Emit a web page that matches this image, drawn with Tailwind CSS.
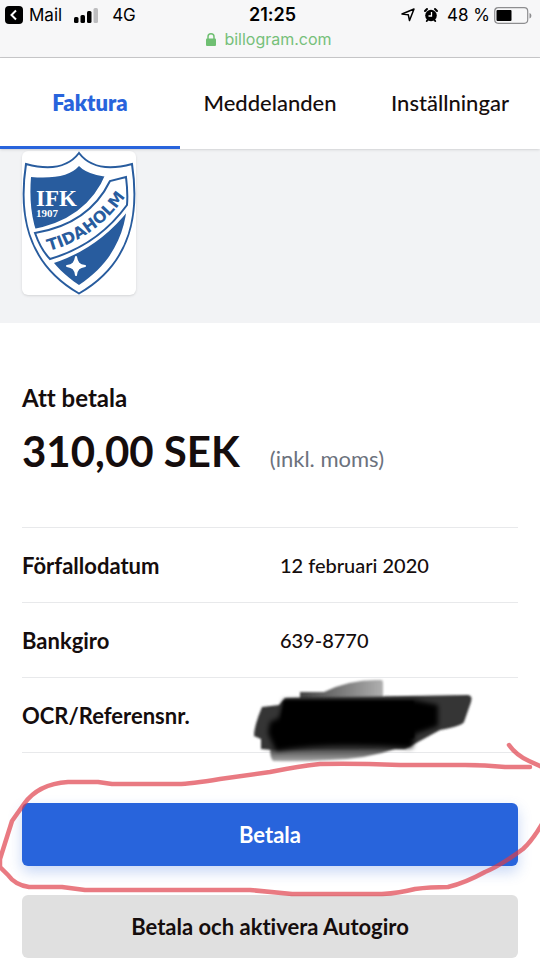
<!DOCTYPE html>
<html lang="sv">
<head>
  <meta charset="UTF-8">
  <meta name="viewport" content="width=device-width, initial-scale=1.0">
  <title>Faktura</title>
  <script src="https://cdn.jsdelivr.net/npm/@tailwindcss/browser@4"></script>
</head>
<body class="bg-white font-[Lato,sans-serif] text-[#150d0d] overflow-x-hidden [font-variant-ligatures:none]">
  <!-- Statusfält -->
  <header class="bg-[#f7f7f8] border-b border-[#c9c9cb] h-[58px] pt-[3px] font-[Inter,sans-serif] text-black">
    <div class="grid grid-cols-3 items-center h-6 pl-[5px] text-[17px] leading-6">
      <div class="flex items-center">
        <a href="#" class="flex items-center gap-[6px]">
          <svg class="w-[18px] h-[18px]" viewBox="0 0 18 18"><rect width="18" height="18" rx="4"/><path d="M11 4.500 6.500 9l4.500 4.500" fill="none" stroke="#fff" stroke-width="2"/></svg>
          Mail
        </a>
        <svg class="w-6 h-[15px] ml-3" viewBox="0 0 24 15"><rect y="9" width="4.500" height="6" rx="1.500"/><rect x="6.500" y="7" width="4.500" height="8" rx="1.500"/><rect x="13" y="3" width="4.500" height="12" rx="1.500"/><rect x="19.500" width="4.500" height="15" rx="1.500" fill="#bdbdbf"/></svg>
        <span class="ml-[14px]">4G</span>
      </div>
      <div class="text-center text-lg leading-6 font-semibold">21:25</div>
      <div class="flex items-center justify-end pr-2 whitespace-nowrap">
        <svg class="w-[14px] h-[14px] mr-2 shrink-0" viewBox="0 0 14 14"><path d="M13 1 8.500 12.500 7.300 6.800 1 6Z" fill="none" stroke="#000" stroke-width="1.500" stroke-linejoin="round"/></svg>
        <svg class="w-4 h-4 mr-2 shrink-0" viewBox="0 0 16 16"><circle cx="8" cy="8.500" r="5.800"/><path d="M2 4 4 2M12 2l2 2M3.800 14l.8-1M12.200 14l-.8-1" stroke="#000" stroke-width="2" stroke-linecap="round"/><path d="M8.500 5v4H5.500" fill="none" stroke="#fff" stroke-width="1.300"/></svg>
        48 %
        <svg class="w-[38px] h-[17px] ml-1 shrink-0" viewBox="0 0 38 17"><rect x=".7" y=".7" width="33" height="15.600" rx="3.500" fill="none" stroke="#8e8e90" stroke-width="1.200"/><rect x="2.500" y="3" width="15" height="11" rx="1"/><path d="M35.500 6v5.500c2.500-.8 2.500-4.700 0-5.500Z" fill="#8e8e90"/></svg>
      </div>
    </div>
    <div class="flex items-center justify-center gap-2 pr-[2px] text-[#76c07a] text-base leading-6">
      <svg class="w-[10px] h-[13px]" viewBox="0 0 10 13"><rect y="5.500" width="10" height="7.500" rx="1" fill="#6fbf72"/><path d="M2 6V3.800a3 3 0 0 1 6 0V6" fill="none" stroke="#6fbf72" stroke-width="1.500"/></svg>
      billogram.com
    </div>
  </header>

  <!-- Flikar -->
  <nav class="relative grid grid-cols-3 h-[91px] bg-white text-[22px] text-center font-medium shadow-sm">
    <a href="#" class="flex items-center justify-center border-b-3 border-[#2864dc] text-[#2864dc] font-extrabold">Faktura</a>
    <a href="#" class="flex items-center justify-center border-b-3 border-transparent">Meddelanden</a>
    <a href="#" class="flex items-center justify-center border-b-3 border-transparent">Inställningar</a>
  </nav>

  <!-- Avsändare -->
  <section class="bg-[#f2f3f5] h-[174px] px-[22px] pt-[2px]">
    <svg class="w-[114px] h-[144px] bg-white rounded-md shadow-sm" viewBox="0 0 114 144" role="img" aria-label="IFK Tidaholm">
      <defs>
        <clipPath id="inner"><path d="M57 13Q68 26 105 23C111 64 104 107 57 136C10 107 3 64 7 23Q45 26 57 13Z"/></clipPath>
      </defs>
      <path d="M57 2Q73 23 110 13C117 59 112 111 57 142.500C2 111-3 59 4 13Q41 23 57 2Z" fill="#fff" stroke="#285c9e" stroke-width="2"/>
      <path d="M57 15Q68 27 105 27C108 64 101 105 57 134C13 105 6 64 9 26Q45 29 57 15Z" fill="#285c9e"/>
      <g clip-path="url(#inner)">
        <path d="M0 80Q64 72 84 22L112 18V52Q76 102 18 116Z" fill="#fff"/>
      </g>
      <path d="M13 82Q67 73 88 30L104 26Q106 42 105 54Q76 94 28 108Q19 99 13 82Z" fill="#fff" stroke="#285c9e" stroke-width="2"/>
      <path d="M54 106c1 6 3 8 9 9-6 1-8 3-9 9-1-6-3-8-9-9 6-1 8-3 9-9Z" fill="#fff" stroke="#fff" stroke-width="2" stroke-linejoin="round"/>
      <text x="14" y="55" font-family="Liberation Serif" font-weight="700" font-size="23" fill="#fff">IFK</text>
      <text x="14" y="66" font-family="Liberation Serif" font-weight="700" font-size="11" fill="#fff">1907</text>
      <path id="band" d="M27 100Q74 87 103 46" fill="none"/>
      <text font-family="DejaVu Sans" font-weight="700" font-size="16" fill="#285c9e"><textPath href="#band">TIDAHOLM</textPath></text>
    </svg>
  </section>

  <main class="px-[22px] pt-[60px]">
    <h2 class="text-2xl leading-[30px] font-bold">Att betala</h2>
    <p class="mt-2 flex items-baseline gap-[30px]">
      <strong class="text-[42px] leading-[60px] font-bold">310,00 SEK</strong>
      <span class="text-[22px] text-[#6c727d]">(inkl. moms)</span>
    </p>

    <table class="w-full mt-[46px] border-t border-[#e8e9eb] text-[22px] text-left">
      <tbody>
        <tr class="h-[75px] border-b border-[#e8e9eb]">
          <th scope="row" class="w-[52%] font-bold">Förfallodatum</th>
          <td class="text-xl font-medium">12 februari 2020</td>
        </tr>
        <tr class="h-[75px] border-b border-[#e8e9eb]">
          <th scope="row" class="font-bold">Bankgiro</th>
          <td class="text-xl font-medium">639-8770</td>
        </tr>
        <tr class="h-[75px] border-b border-[#e8e9eb]">
          <th scope="row" class="font-bold">OCR/Referensnr.</th>
          <td class="relative">
            <!-- Överstruket nummer -->
            <svg class="absolute -left-10 top-0 w-[250px] h-[90px] max-w-none" viewBox="0 0 250 90" role="img" aria-label="Dolt nummer">
              <defs>
                <filter id="soft" x="-5%" y="-10%" width="110%" height="120%"><feGaussianBlur stdDeviation="1"/></filter>
                <filter id="softer" x="-5%" y="-10%" width="110%" height="120%"><feGaussianBlur stdDeviation="2.500"/></filter>
                <linearGradient id="top"><stop stop-color="#444"/><stop offset="1" stop-color="#b0b0b0"/></linearGradient>
                <linearGradient id="low" x2="0" y2="1"><stop offset=".3" stop-color="#111"/><stop offset="1" stop-color="#aaa"/></linearGradient>
              </defs>
              <g filter="url(#soft)">
                <path d="M60 14H84Q110 1 141 2Q143 2 143 5V24H60Z" fill="url(#top)"/>
                <path d="M32 56H190Q178 65 158 70Q127 81 90 82 60 84 33 83Q28 78 32 56Z" fill="url(#low)"/>
                <path d="M22 29 39 27 45 20 228 17Q233 18 231 24L224 44Q222 48 200 52L178 64 165 71 32 72 21 71V61L14 58Q14 48 22 29Z" fill="#363636"/>
              </g>
              <path d="M44 22H174L198 27V48L175 56 172 70Q90 64 36 73L28 55 30 44 39 40Z" fill="#000" filter="url(#softer)"/>
              <path d="M44 23H174V60Q90 60 38 66Z" fill="#000" filter="url(#soft)"/>
            </svg>
          </td>
        </tr>
      </tbody>
    </table>

    <div class="relative mt-[50px] pb-[2px] grid gap-[29px] text-[22px] font-bold">
      <button type="button" class="h-[63px] rounded-md bg-[#2864dc] text-white shadow-[0_6px_14px_#2864dc40]">Betala</button>
      <button type="button" class="h-[63px] rounded-md bg-[#e0e0e0]">Betala och aktivera Autogiro</button>

      <!-- Ringmarkering -->
      <svg class="absolute -inset-x-[22px] -top-[73px] h-[180px] w-[calc(100%+44px)] pointer-events-none" viewBox="0 0 540 180" preserveAspectRatio="none" fill="none" stroke="#df3b47" stroke-opacity=".68" stroke-width="4.500" stroke-linecap="round" stroke-linejoin="round">
        <path d="M530 37H505Q485 35 465 35H400Q350 33 320 34Q300 36 270 42L220 49Q190 54 178 54H112L98 52H68Q38 54 24 74Q17 84 12 91L0 129V137L8 145Q15 155 29 157H62L85 160H250L292 164H382Q400 163 415 159 430 157 448 157 465 153 485 142 500 136 523 119 532 111 542 94M509 15Q516 25 529 31L542 37"/>
      </svg>
    </div>
  </main>
</body>
</html>
